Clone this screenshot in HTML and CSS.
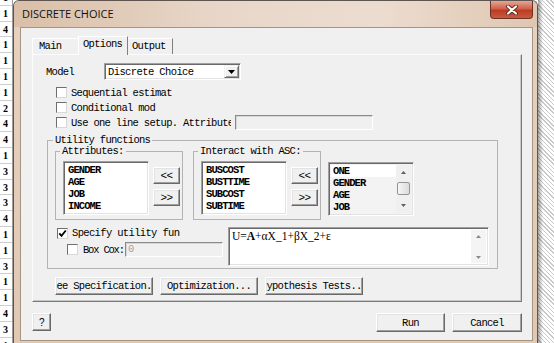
FILE: index.html
```html
<!DOCTYPE html>
<html lang="en">
<head>
    <meta charset="UTF-8">
    <title>Discrete Choice</title>
    <link rel="stylesheet" href="styles.css">
</head>
<body>
    <!-- spreadsheet column behind the dialog -->
    <div class="sheet">
        <div class="cell">1</div>
        <div class="cell">1</div>
        <div class="cell">4</div>
        <div class="cell">1</div>
        <div class="cell">1</div>
        <div class="cell">1</div>
        <div class="cell">1</div>
        <div class="cell">2</div>
        <div class="cell">4</div>
        <div class="cell">4</div>
        <div class="cell">1</div>
        <div class="cell">3</div>
        <div class="cell">3</div>
        <div class="cell">3</div>
        <div class="cell">4</div>
        <div class="cell">1</div>
        <div class="cell">1</div>
        <div class="cell">3</div>
        <div class="cell">1</div>
        <div class="cell">1</div>
        <div class="cell">4</div>
        <div class="cell">3</div>
        <div class="cell">1</div>
    </div>

    <!-- Dialog window -->
    <div class="window">
        <div class="titlebar">
            <span class="title">DISCRETE CHOICE</span>
            <div class="close">
                <svg width="12" height="10" viewBox="0 0 12 10">
                    <path d="M2 1.5 L10 8.5 M10 1.5 L2 8.5" stroke="#5a2418" stroke-width="3.8" stroke-linecap="round"/>
                    <path d="M2 1.5 L10 8.5 M10 1.5 L2 8.5" stroke="#fff" stroke-width="2.2" stroke-linecap="round"/>
                </svg>
            </div>
        </div>

        <div class="client">
            <div class="tabs">
                <div class="tab tab-main">Main</div>
                <div class="tab tab-options active">Options</div>
                <div class="tab tab-output">Output</div>
            </div>

            <div class="panel">
                <div class="model-row">
                    <span class="model-label">Model</span>
                    <div class="combo">
                        <span class="combo-text">Discrete Choice</span>
                        <span class="combo-btn">
                            <svg width="7" height="4" viewBox="0 0 7 4"><path d="M0 0 H7 L3.5 4 Z" fill="#000"/></svg>
                        </span>
                    </div>
                </div>

                <div class="checks">
                    <div class="check-row"><span class="cb"></span><span>Sequential estimat</span></div>
                    <div class="check-row"><span class="cb"></span><span>Conditional mod</span></div>
                    <div class="check-row">
                        <span class="cb"></span>
                        <span class="clip attr-label">Use one line setup. Attributes</span>
                        <span class="edit attr-edit"></span>
                    </div>
                </div>

                <fieldset class="group utility">
                    <legend>Utility functions</legend>
                    <div class="lists-row">
                        <fieldset class="group sub">
                            <legend>Attributes:</legend>
                            <div class="sub-body">
                                <div class="listbox">
                                    <div>GENDER</div>
                                    <div>AGE</div>
                                    <div>JOB</div>
                                    <div>INCOME</div>
                                </div>
                                <div class="arrows">
                                    <button class="btn arrow-btn">&lt;&lt;</button>
                                    <button class="btn arrow-btn">&gt;&gt;</button>
                                </div>
                            </div>
                        </fieldset>

                        <fieldset class="group sub">
                            <legend>Interact with ASC:</legend>
                            <div class="sub-body">
                                <div class="listbox">
                                    <div>BUSCOST</div>
                                    <div>BUSTTIME</div>
                                    <div>SUBCOST</div>
                                    <div>SUBTIME</div>
                                </div>
                                <div class="arrows">
                                    <button class="btn arrow-btn">&lt;&lt;</button>
                                    <button class="btn arrow-btn">&gt;&gt;</button>
                                </div>
                            </div>
                        </fieldset>

                        <div class="listbox asc-list">
                            <div class="asc-items">
                                <div class="selected">ONE</div>
                                <div>GENDER</div>
                                <div>AGE</div>
                                <div>JOB</div>
                            </div>
                            <div class="vscroll">
                                <span class="sb-arrow"><svg width="5" height="3" viewBox="0 0 5 3"><path d="M0 3 L2.5 0 L5 3 Z" fill="#606060"/></svg></span>
                                <span class="thumb"></span>
                                <span class="sb-fill"></span>
                                <span class="sb-arrow"><svg width="5" height="3" viewBox="0 0 5 3"><path d="M0 0 H5 L2.5 3 Z" fill="#606060"/></svg></span>
                            </div>
                        </div>
                    </div>

                    <div class="spec-row">
                        <div class="spec-left">
                            <div class="spec-check">
                                <span class="cb">
                                    <svg width="9" height="9" viewBox="0 0 9 9"><polyline points="1.3,4.3 3.5,6.8 7.8,1.5" fill="none" stroke="#000" stroke-width="1.8"/></svg>
                                </span>
                                <span class="clip spec-label">Specify utility function</span>
                            </div>
                            <div class="boxcox">
                                <span class="cb"></span>
                                <span class="clip boxcox-label">Box Cox:</span>
                                <span class="edit boxcox-edit">0</span>
                            </div>
                        </div>
                        <div class="formula">
                            <div class="formula-text">U=<b>A</b>+αX_1+βX_2+ε</div>
                            <div class="vscroll light">
                                <span class="sb-arrow small"><svg width="5" height="3" viewBox="0 0 5 3"><path d="M0 3 L2.5 0 L5 3 Z" fill="#8a8a8a"/></svg></span>
                                <span class="sb-fill"></span>
                                <span class="sb-arrow small"><svg width="5" height="3" viewBox="0 0 5 3"><path d="M0 0 H5 L2.5 3 Z" fill="#8a8a8a"/></svg></span>
                            </div>
                        </div>
                    </div>
                </fieldset>

                <div class="action-row">
                    <button class="btn wide">ee Specification.</button>
                    <button class="btn wide">Optimization...</button>
                    <button class="btn wide">ypothesis Tests..</button>
                </div>
            </div>

            <div class="footer">
                <button class="btn help">?</button>
                <div class="footer-right">
                    <button class="btn run">Run</button>
                    <button class="btn cancel">Cancel</button>
                </div>
            </div>
        </div>
    </div>

    <div class="backdrop"></div>
</body>
</html>
```

FILE: styles.css
```css
* {
    box-sizing: border-box;
}

body {
    margin: 0;
    width: 554px;
    height: 343px;
    overflow: hidden;
    display: flex;
    background: #fff;
    font-family: "Liberation Mono", monospace;
    font-size: 10.5px;
    letter-spacing: -0.7px;
    color: #000;
}

/* spreadsheet strip */
.sheet {
    width: 13px;
    flex: none;
    align-self: flex-start;
    margin-top: -10px;
    border-right: 1px solid #9c9c9c;
    background: #fff;
    display: flex;
    flex-direction: column;
}

.cell {
    height: 15.8px;
    flex: none;
    border-bottom: 1px solid #cfcfcf;
    padding-left: 3px;
    font-family: "Liberation Serif", serif;
    font-weight: bold;
    font-size: 10px;
    line-height: 15px;
    letter-spacing: 0;
}

/* window frame */
.window {
    width: 525px;
    flex: none;
    display: flex;
    flex-direction: column;
    background: linear-gradient(to bottom, #e6d2c0, #e0c8b3);
    border: 1px solid #5e5550;
    border-bottom: none;
    border-radius: 6px 6px 0 0;
}

.titlebar {
    height: 26px;
    flex: none;
    display: flex;
    justify-content: space-between;
    align-items: flex-start;
    padding-left: 8px;
    background: linear-gradient(to right, #d9bfa8, #e8d7c9 40%, #ecdccf 70%, #dfc6b1);
    border-radius: 5px 5px 0 0;
}

.title {
    font-family: "Open Sans", sans-serif;
    font-size: 11px;
    letter-spacing: 0;
    line-height: 26px;
    color: #111;
}

.close {
    width: 43px;
    height: 18px;
    margin-right: 4px;
    display: flex;
    align-items: center;
    justify-content: center;
    border: 1px solid #6b3226;
    border-top: none;
    border-radius: 0 0 4px 4px;
    background: linear-gradient(to bottom, #e3a896, #d0624b 45%, #be3b22 55%, #c85a40);
}

.client {
    flex: 1;
    margin: 0 4px 2px 6px;
    border: 1px solid #a79482;
    background: #f0f0f0;
    padding: 8px 10px 0 11px;
}

/* tabs */
.tabs {
    height: 18px;
    display: flex;
    align-items: flex-end;
}

.tab {
    height: 16px;
    line-height: 15px;
    border: 1px solid;
    border-color: #fff #808080 transparent #fff;
    border-bottom: none;
    background: #f0f0f0;
}

.tab-main {
    width: 46px;
    padding-left: 6px;
    border-right: none;
}

.tab-options {
    width: 50px;
    padding-left: 4px;
}

.tab-output {
    width: 45px;
    padding-left: 4px;
    border-left: none;
}

.tab.active {
    height: 19px;
    margin-bottom: -1px;
    line-height: 14px;
    position: relative;
    z-index: 1;
}

.panel {
    height: 248px;
    border: 1px solid;
    border-color: #fcfcfc #7a7a7a #7a7a7a #fcfcfc;
    box-shadow: inset -1px -1px 0 #c8c8c8;
}

/* model row */
.model-row {
    margin-top: 8px;
    padding-left: 13px;
    height: 17px;
    display: flex;
    align-items: center;
}

.model-label {
    width: 58px;
}

.combo {
    width: 137px;
    height: 17px;
    display: flex;
    align-items: center;
    background: #fff;
    border: 1px solid;
    border-color: #a0a0a0 #fff #fff #a0a0a0;
    box-shadow: inset 1px 1px 0 #696969, inset -1px -1px 0 #e3e3e3;
    padding: 1px 1px 1px 3px;
}

.combo-text {
    flex: 1;
    letter-spacing: -0.6px;
}

.combo-btn {
    width: 15px;
    height: 13px;
    display: flex;
    align-items: center;
    justify-content: center;
    background: #f0f0f0;
    border: 1px solid;
    border-color: #f0f0f0 #696969 #696969 #f0f0f0;
    box-shadow: inset 1px 1px 0 #fff, inset -1px -1px 0 #a0a0a0;
}

/* check boxes */
.checks {
    margin-top: 5px;
    padding-left: 23px;
}

.check-row {
    height: 15px;
    display: flex;
    align-items: center;
    gap: 4px;
}

.cb {
    width: 11px;
    height: 11px;
    flex: none;
    display: flex;
    align-items: center;
    justify-content: center;
    background: #fff;
    border: 1px solid;
    border-color: #6f6f6f #d8d8d8 #d8d8d8 #6f6f6f;
}

.clip {
    white-space: nowrap;
    overflow: hidden;
}

.attr-label {
    width: 160px;
}

.edit {
    height: 15px;
    background: #f0f0f0;
    border: 1px solid;
    border-color: #8a8a8a #fff #fff #8a8a8a;
    box-shadow: inset 1px 1px 0 #d6d6d6;
}

.attr-edit {
    width: 138px;
}

/* group boxes */
fieldset {
    margin: 0;
    min-width: 0;
}

.group {
    border: 1px solid #b4b4b4;
}

.group legend {
    padding: 0 2px;
    line-height: 12px;
}

.utility {
    width: 451px;
    margin: 4px 0 0 14px;
    padding: 0 8px 2px 7px;
}

.utility > legend {
    margin-left: -2px;
}

.lists-row {
    margin-top: -1px;
    display: flex;
    align-items: flex-start;
}

.sub {
    width: 128px;
    padding: 4px 2px 4px 7px;
}

.sub + .sub {
    margin-left: 10px;
}

.sub legend {
    margin-left: -3px;
}

.sub-body {
    display: flex;
    align-items: flex-start;
    gap: 4px;
}

.listbox {
    width: 86px;
    height: 54px;
    flex: none;
    background: #fff;
    border: 1px solid;
    border-color: #a0a0a0 #fff #fff #a0a0a0;
    box-shadow: inset 1px 1px 0 #696969, inset -1px -1px 0 #e3e3e3;
    padding: 2px 4px;
    font-weight: bold;
    line-height: 12px;
    letter-spacing: -0.9px;
}

.arrows {
    width: 27px;
    margin-top: 6px;
    display: flex;
    flex-direction: column;
    gap: 5px;
}

.asc-list {
    margin: 17px 0 0 7px;
    display: flex;
    padding: 2px 2px 2px 2px;
    background: #f3f3f3;
}

.asc-items {
    flex: 1;
}

.asc-items div {
    padding-left: 2px;
}

.asc-items .selected {
    background: #fff;
}

.vscroll {
    width: 15px;
    display: flex;
    flex-direction: column;
    align-items: center;
    background: #f0f0f0;
}

.vscroll.light {
    background: #f4f4f4;
}

.sb-arrow {
    height: 15px;
    display: flex;
    align-items: center;
    justify-content: center;
}

.sb-arrow.small {
    height: 12px;
}

.thumb {
    width: 13px;
    height: 13px;
    margin-top: 2px;
    border: 1px solid #959595;
    border-radius: 2px;
    background: linear-gradient(to right, #f6f6f6, #dcdcdc);
}

.sb-fill {
    flex: 1;
}

/* utility specification row */
.spec-row {
    margin-top: 7px;
    height: 39px;
    display: flex;
}

.spec-left {
    width: 173px;
    padding-left: 2px;
}

.spec-check {
    height: 12px;
    display: flex;
    align-items: center;
    gap: 4px;
}

.spec-label {
    width: 108px;
    letter-spacing: -0.65px;
}

.boxcox {
    margin-top: 3px;
    height: 15px;
    padding-left: 10px;
    display: flex;
    align-items: center;
    gap: 5px;
}

.boxcox-label {
    width: 42px;
    letter-spacing: -1.2px;
}

.boxcox-edit {
    width: 98px;
    margin-left: -5px;
    padding-left: 2px;
    line-height: 12px;
    color: #a0a0a0;
}

.formula {
    width: 261px;
    height: 39px;
    display: flex;
    background: #fff;
    border: 1px solid;
    border-color: #a0a0a0 #fff #fff #a0a0a0;
    box-shadow: inset 1px 1px 0 #696969, inset -1px -1px 0 #e3e3e3;
    padding: 2px 2px 2px 2px;
}

.formula-text {
    flex: 1;
    padding-left: 1px;
    font-family: "Liberation Serif", serif;
    font-size: 11.5px;
    letter-spacing: 0;
    line-height: 12px;
}

/* buttons */
.btn {
    margin: 0;
    padding: 0;
    font-family: inherit;
    font-size: inherit;
    letter-spacing: inherit;
    color: #000;
    background: #f0f0f0;
    border: 1px solid;
    border-color: #fff #696969 #696969 #fff;
    box-shadow: inset -1px -1px 0 #a0a0a0, inset 1px 1px 0 #e3e3e3;
    white-space: nowrap;
    overflow: hidden;
}

.arrow-btn {
    height: 17px;
    font-size: 11px;
}

.action-row {
    margin-top: 8px;
    padding-left: 22px;
    display: flex;
    gap: 7px;
}

.wide {
    width: 98px;
    height: 18px;
}

.footer {
    margin-top: 11px;
    height: 19px;
    display: flex;
    justify-content: space-between;
}

.help {
    width: 19px;
    height: 18px;
    font-family: "Liberation Sans", sans-serif;
    font-size: 10px;
}

.footer-right {
    display: flex;
    gap: 7px;
}

.run {
    width: 69px;
    height: 19px;
}

.cancel {
    width: 70px;
    height: 19px;
}

/* desktop behind the window */
.backdrop {
    flex: 1;
    background:
        linear-gradient(to right, rgba(0, 0, 0, 0.35), rgba(0, 0, 0, 0) 5px),
        repeating-linear-gradient(45deg, #fff 0 2px, #c9c9c9 2px 3px);
}
```
